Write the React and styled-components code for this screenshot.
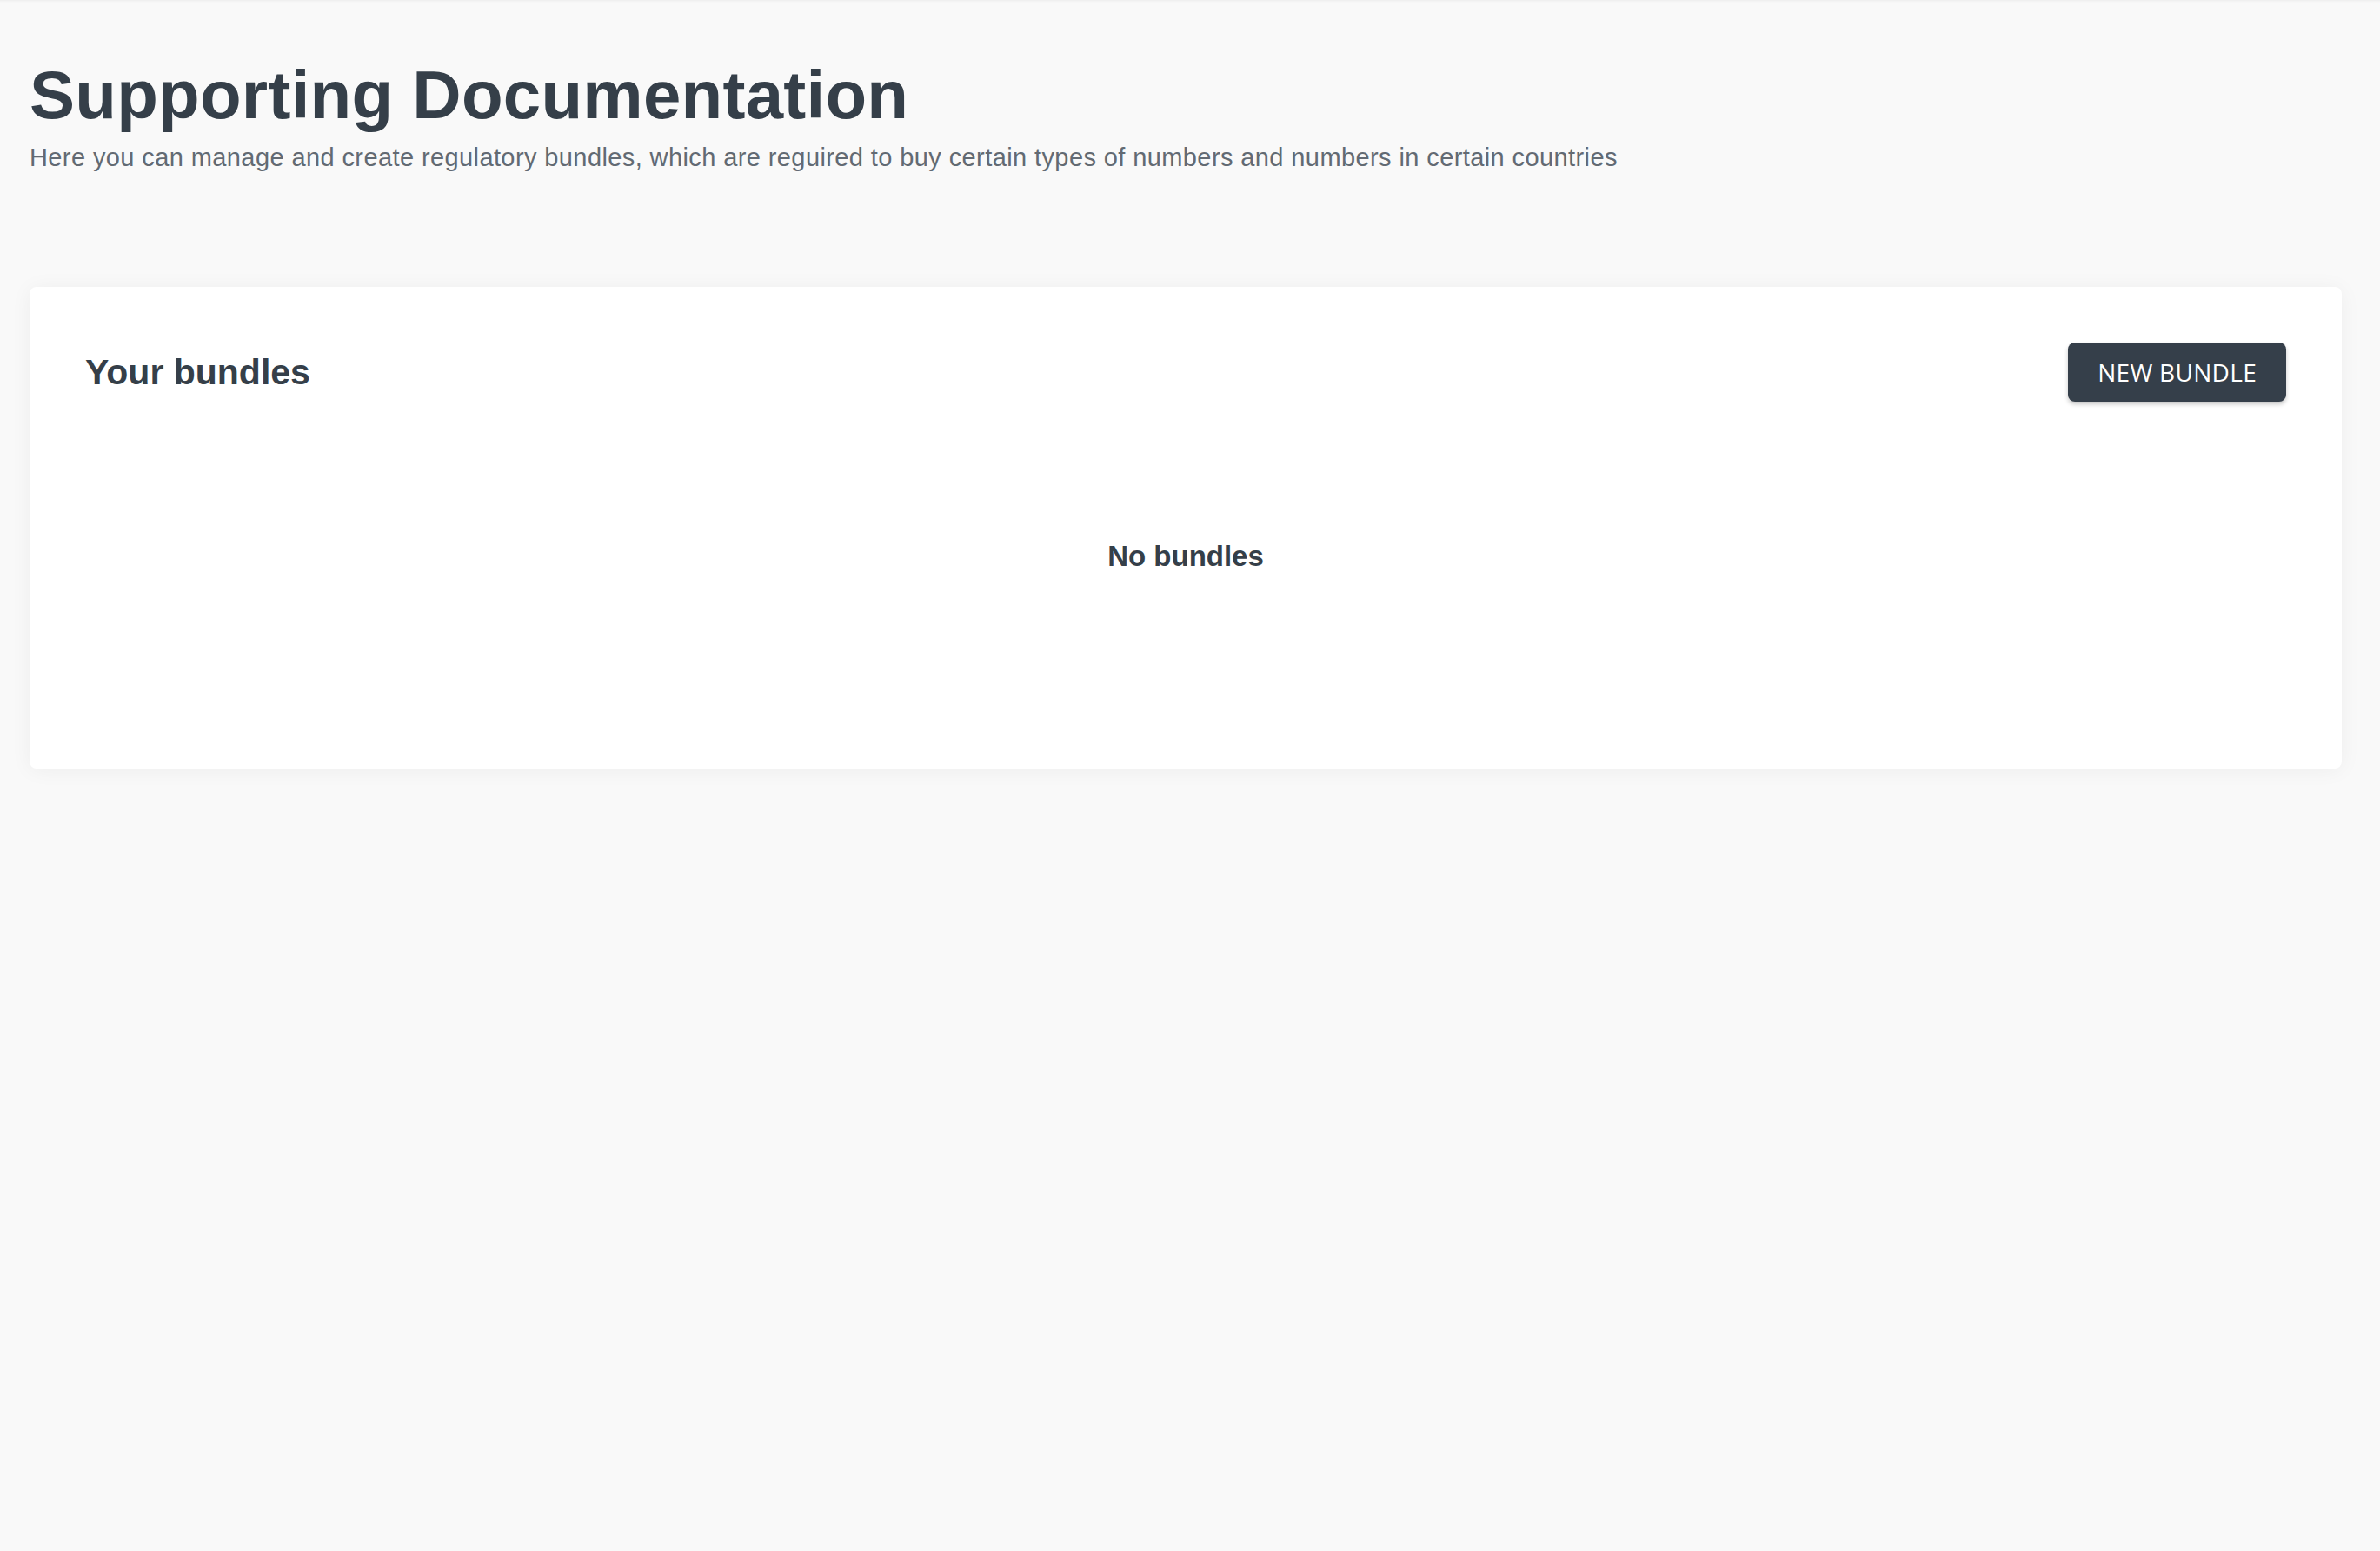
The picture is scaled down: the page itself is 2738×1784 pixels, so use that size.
import React from "react";
import styled, { createGlobalStyle } from "styled-components";

const GlobalStyle = createGlobalStyle`
	html, body {
		margin: 0;
		padding: 0;
		background: #f9f9f9;
	}
	body {
		font-family: "Liberation Sans", Arial, sans-serif;
		color: #353f49;
	}
	* {
		box-sizing: border-box;
	}
`;

const Page = styled.div`
	min-height: 1784px;
	background: #f9f9f9;
	box-shadow: inset 0 3px 3px -2px rgba(0, 0, 0, 0.06);
	padding: 63px 44px 0 34px;
`;

const PageHeader = styled.header`
	display: flex;
	flex-direction: column;
	gap: 4px;
	margin-bottom: 129px;
`;

const Title = styled.h1`
	margin: 0;
	font-size: 78px;
	line-height: 1.2;
	font-weight: 700;
	letter-spacing: 0.25px;
	color: #353f49;
`;

const Subtitle = styled.p`
	margin: 0;
	font-size: 29px;
	line-height: 1.4;
	font-weight: 400;
	letter-spacing: 0.4px;
	color: #626a73;
`;

const Card = styled.section`
	background: #ffffff;
	border-radius: 8px;
	box-shadow: 0 2px 24px rgba(0, 0, 0, 0.05);
	padding: 64px;
`;

const CardHeader = styled.div`
	display: flex;
	align-items: center;
	justify-content: space-between;
`;

const CardTitle = styled.h2`
	margin: 0;
	font-size: 41px;
	line-height: 1.2;
	font-weight: 700;
	color: #353f49;
`;

const Button = styled.button`
	height: 68px;
	padding: 0 34px;
	border: none;
	border-radius: 8px;
	background: #353f4a;
	color: #ffffff;
	font-family: "Open Sans", sans-serif;
	font-size: 28px;
	font-weight: 400;
	letter-spacing: 0.3px;
	box-shadow: 0 3px 5px rgba(0, 0, 0, 0.22);
	cursor: pointer;
`;

const EmptyState = styled.div`
	display: flex;
	justify-content: center;
	padding: 153px 0 155px;
	font-size: 33px;
	line-height: 1.5;
	font-weight: 700;
	color: #353f49;
`;

const App = () => {
	const bundles = [];

	return (
		<>
			<GlobalStyle />
			<Page>
				<PageHeader>
					<Title>Supporting Documentation</Title>
					<Subtitle>
						Here you can manage and create regulatory bundles, which are reguired to buy certain types of numbers and numbers in certain countries
					</Subtitle>
				</PageHeader>
				<Card>
					<CardHeader>
						<CardTitle>Your bundles</CardTitle>
						<Button>NEW BUNDLE</Button>
					</CardHeader>
					{bundles.length === 0 && <EmptyState>No bundles</EmptyState>}
				</Card>
			</Page>
		</>
	);
};

export default App;
